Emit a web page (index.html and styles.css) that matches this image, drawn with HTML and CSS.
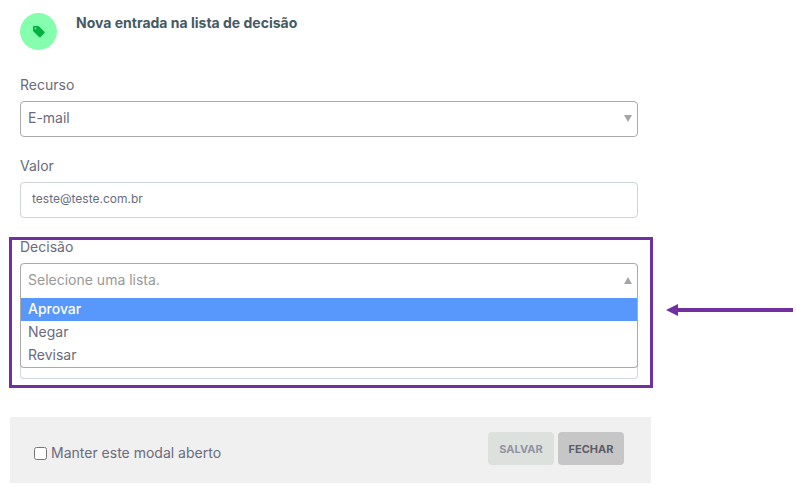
FILE: index.html
```html
<!DOCTYPE html>
<html lang="pt-BR">
<head>
<meta charset="utf-8">
<meta name="viewport" content="width=device-width, initial-scale=1">
<title>Nova entrada na lista de decisão</title>
<link rel="stylesheet" href="styles.css">
</head>
<body>
<form class="page">
  <div class="intro">
    <header class="header">
      <span class="badge">
        <svg width="14" height="14" viewBox="0 0 14 14" aria-hidden="true">
          <path fill="#00b140" fill-rule="evenodd" d="M2 1h4.200q.5 0 .9.400l5.300 5.300q.8.800 0 1.600L8.700 12q-.8.800-1.600 0L1.500 6.600Q1 6.100 1 5.500V2q0-1 1-1zM3.400 2.500a.9.900 0 1 0 0 1.800.9.900 0 0 0 0-1.800z"/>
        </svg>
      </span>
      <h1 class="title">Nova entrada na lista de decisão</h1>
    </header>
    <div class="field">
      <label class="label" for="recurso">Recurso</label>
      <div class="select">
        <select class="control control-select" id="recurso"><option>E-mail</option></select>
        <svg class="caret" width="8" height="7" viewBox="0 0 8 7" aria-hidden="true"><path fill="#a6a6a6" d="M0 0h8L4 7z"/></svg>
      </div>
    </div>
    <div class="field">
      <label class="label" for="valor">Valor</label>
      <input class="control control-input" id="valor" type="text" value="teste@teste.com.br">
    </div>
  </div>

  <section class="highlight">
    <label class="label" for="decisao">Decisão</label>
    <div class="dropdown">
      <div class="select">
        <select class="control control-select control-open" id="decisao"><option>Selecione uma lista.</option></select>
        <svg class="caret" width="8" height="7" viewBox="0 0 8 7" aria-hidden="true"><path fill="#a6a6a6" d="M0 7h8L4 0z"/></svg>
      </div>
      <ul class="options" role="listbox" aria-label="Decisão">
        <li class="option option-active" role="option" aria-selected="true">Aprovar</li>
        <li class="option" role="option" aria-selected="false">Negar</li>
        <li class="option" role="option" aria-selected="false">Revisar</li>
      </ul>
    </div>
  </section>
  <svg class="arrow" width="127" height="12" viewBox="0 0 127 12" aria-hidden="true"><path fill="#7030a0" d="M0 6 12 0v4h115v4H12v4z"/></svg>

  <footer class="footer">
    <label class="keep" for="manter"><input class="check" id="manter" type="checkbox">Manter este modal aberto</label>
    <div class="actions">
      <button class="button button-save" type="button" disabled>SALVAR</button>
      <button class="button button-close" type="button">FECHAR</button>
    </div>
  </footer>
</form>
</body>
</html>
```
FILE: styles.css
```css
* {
  box-sizing: border-box;
}

body {
  margin: 0;
  background: #fff;
  color: #6a6b7c;
  font-family: Inter, "Open Sans", sans-serif;
  font-size: 14px;
  line-height: 20px;
}

.page {
  display: grid;
  grid-template-columns: minmax(0, 1fr) 140px;
  padding: 13px 3px 4px 9px;
}

.intro {
  grid-column: 1;
  padding: 0 15px 0 11px;
}

.header {
  display: flex;
  gap: 19px;
  margin-bottom: 25px;
}

.badge {
  display: flex;
  flex: none;
  align-items: center;
  justify-content: center;
  width: 37px;
  height: 37px;
  border-radius: 50%;
  background: #85ffad;
}

.title {
  margin: 0;
  color: #455a64;
  font-size: 14px;
  font-weight: 700;
  line-height: 20px;
}

.field {
  margin-bottom: 19px;
}

.label {
  display: block;
  margin-bottom: 6px;
}

.select {
  position: relative;
}

.control {
  display: block;
  width: 100%;
  height: 36px;
  margin: 0;
  border: 1px solid #cfd4dc;
  border-radius: 4px;
  background: #fff;
  color: inherit;
  font: inherit;
}

.control-select {
  appearance: none;
  padding: 0 24px 2px 7px;
  border-color: #aaa;
}

.control-input {
  padding: 0 11px 4px;
  font-size: 12px;
}

.control-open {
  border-radius: 4px 4px 0 0;
  color: #999;
}

.caret {
  position: absolute;
  top: 14px;
  right: 6px;
  pointer-events: none;
}

.highlight {
  grid-column: 1;
  padding: 0 12px 6px 8px;
  border: 3px solid #7030a0;
}

.highlight .label {
  margin: -3px 0 6px;
}

.dropdown {
  padding-bottom: 10px;
  border: 1px solid #cfd8dc;
  border-top: 0;
  border-radius: 4px;
}

.dropdown .select,
.options {
  margin: 0 -1px;
}

.options {
  padding: 0;
  border: 1px solid #aaa;
  border-top: 0;
  border-radius: 0 0 4px 4px;
  list-style: none;
  margin-top: -1px;
}

.option {
  padding: 1px 7px 2px;
}

.option-active {
  position: relative;
  background: #5897fb;
  color: #fff;
  font-weight: 500;
}

.arrow {
  grid-column: 2;
  align-self: center;
  justify-self: end;
  margin-bottom: 5px;
}

.footer {
  grid-column: 1;
  display: flex;
  align-items: flex-start;
  justify-content: space-between;
  margin: 29px 2px 0 1px;
  padding: 15px 27px 18px 24px;
  background: #f0f0f0;
}

.keep {
  display: flex;
  align-items: center;
  gap: 4px;
  margin-top: 11px;
}

.check {
  width: 13px;
  height: 13px;
  margin: 0;
}

.actions {
  display: flex;
  gap: 4px;
}

.button {
  width: 66px;
  height: 33px;
  padding: 0;
  border: 0;
  border-radius: 4px;
  font: inherit;
  font-size: 11px;
  font-weight: 700;
}

.button-save {
  background: #dce1de;
  color: #9293a0;
}

.button-close {
  background: #c6c6c6;
  color: #5b5c69;
}
```
